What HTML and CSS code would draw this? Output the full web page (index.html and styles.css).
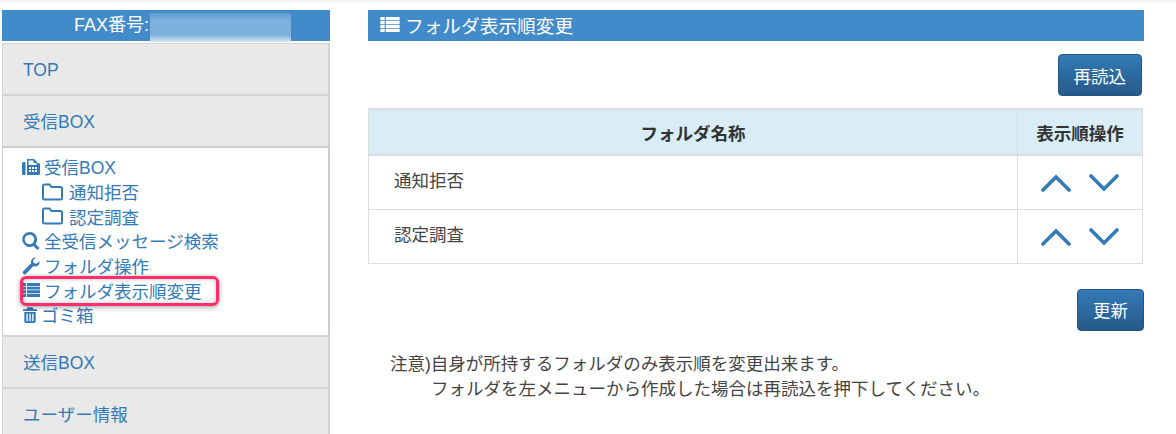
FILE: index.html
```html
<!DOCTYPE html>
<html lang="ja">
  <head>
    <meta charset="UTF-8" />
    <meta name="viewport" content="width=device-width, initial-scale=1.0" />
    <title>フォルダ表示順変更</title>
    <link rel="stylesheet" href="styles.css">
  </head>
  <body>
    <div class="page">
      <div class="side">
        <div class="fax-title">FAX番号:<span class="fax-mask"></span></div>
        <div class="menu">
          <a class="menu-head">TOP</a>
          <a class="menu-head">受信BOX</a>
          <div class="menu-body">
            <a class="item">
              <svg class="ico" viewBox="0 0 18 18"><path d="M0 5.500Q0 4 1.500 4H3.500V17H1.500Q0 17 0 15.500z"/><path fill-rule="evenodd" d="M5 1H12L15 4V5H16.500Q18 5 18 6.500V15.500Q18 17 16.500 17H5ZM6.500 2.500V7H14.500V5H11.500V2.500ZM7 9V11H9V9ZM10 9V11H12V9ZM13 9V11H15V9ZM7 12V14H9V12ZM10 12V14H12V12ZM13 12V14H15V12Z"/></svg>
              受信BOX
            </a>
            <a class="item sub">
              <svg class="ico-folder" viewBox="0 0 21 18"><path d="M1 15V3Q1 1.500 2.500 1.500H7.500L9.500 4H18.500Q20 4 20 5.500V15Q20 16.500 18.500 16.500H2.500Q1 16.500 1 15Z"/></svg>
              通知拒否
            </a>
            <a class="item sub">
              <svg class="ico-folder" viewBox="0 0 21 18"><path d="M1 15V3Q1 1.500 2.500 1.500H7.500L9.500 4H18.500Q20 4 20 5.500V15Q20 16.500 18.500 16.500H2.500Q1 16.500 1 15Z"/></svg>
              認定調査
            </a>
            <a class="item">
              <svg class="ico" viewBox="0 0 18 18"><path fill-rule="evenodd" d="M7.500 0a7.500 7.500 0 0 1 6 12l4 4-2 2-4-4a7.500 7.500 0 1 1-4-14ZM7.500 2.700a4.800 4.800 0 1 0 0 9.600 4.800 4.800 0 0 0 0-9.600Z"/></svg>
              全受信メッセージ検索
            </a>
            <a class="item">
              <svg class="ico" viewBox="0 0 18 18"><path d="M17.500 4.200Q18 7 16 8.500T11.500 9L4 16.800Q2.800 18 1.300 16.800 0 15.400 1.200 14.200L9 6.500Q8.300 4 10 2T14 .500L11 3.300 11.700 6 14.500 6.800Z"/></svg>
              フォルダ操作
            </a>
            <a class="item current">
              <svg class="ico" viewBox="0 0 18 14"><path d="M0 0H4V3H0ZM5 0H18V3H5ZM0 3.700H4V6.500H0ZM5 3.700H18V6.500H5ZM0 7.300H4V10.200H0ZM5 7.300H18V10.200H5ZM0 11H4V14H0ZM5 11H18V14H5Z"/></svg>
              フォルダ表示順変更
            </a>
            <a class="item">
              <svg class="ico trash" viewBox="0 0 16 18"><path fill-rule="evenodd" d="M5 0H11L12 2.500H16V4.500H0V2.500H4ZM1.500 5.500H14.500V16.500Q14.500 18 13 18H3Q1.500 18 1.500 16.500ZM4 7.500V16H5.500V7.500ZM7.300 7.500V16H8.800V7.500ZM10.500 7.500V16H12V7.500Z"/></svg>
              ゴミ箱
            </a>
          </div>
          <a class="menu-head">送信BOX</a>
          <a class="menu-head">ユーザー情報</a>
        </div>
      </div>

      <div class="main">
        <h1 class="main-title">
          <svg class="title-ico" viewBox="0 0 18 14"><path d="M0 0H4V3H0ZM5 0H18V3H5ZM0 3.700H4V6.500H0ZM5 3.700H18V6.500H5ZM0 7.300H4V10.200H0ZM5 7.300H18V10.200H5ZM0 11H4V14H0ZM5 11H18V14H5Z"/></svg>
          フォルダ表示順変更
        </h1>
        <div class="reload-row">
          <button class="btn">再読込</button>
        </div>
        <table class="folders">
          <thead>
            <tr>
              <th>フォルダ名称</th>
              <th class="col-order">表示順操作</th>
            </tr>
          </thead>
          <tbody>
            <tr>
              <td class="col-name">通知拒否</td>
              <td class="col-order">
                <div class="arrows">
                  <svg viewBox="0 0 30 18"><path d="M2 16L15 3L28 16"/></svg>
                  <svg viewBox="0 0 30 18"><path d="M2 2L15 15L28 2"/></svg>
                </div>
              </td>
            </tr>
            <tr>
              <td class="col-name">認定調査</td>
              <td class="col-order">
                <div class="arrows">
                  <svg viewBox="0 0 30 18"><path d="M2 16L15 3L28 16"/></svg>
                  <svg viewBox="0 0 30 18"><path d="M2 2L15 15L28 2"/></svg>
                </div>
              </td>
            </tr>
          </tbody>
        </table>
        <div class="update-row">
          <button class="btn">更新</button>
        </div>
        <div class="note">
          <p>注意)自身が所持するフォルダのみ表示順を変更出来ます。</p>
          <p class="note-2">フォルダを左メニューから作成した場合は再読込を押下してください。</p>
        </div>
      </div>
    </div>
  </body>
</html>
```

FILE: styles.css
```css
* {
  box-sizing: border-box;
  margin: 0;
  font-family: "Liberation Sans", "Noto Sans CJK JP", sans-serif;
}
html, body {
  height: 100%;
  overflow: hidden;
}
body {
  background: linear-gradient(#f4f4f4, #fff 4px) no-repeat;
  font-size: 17.500px;
  color: #444;
}
.page {
  display: flex;
  gap: 38px;
  padding: 10px 0 0 2px;
}

/* left menu */
.side {
  flex: 0 0 328px;
}
.fax-title {
  position: relative;
  height: 31px;
  padding-left: 72px;
  background: #428bca;
  color: #fff;
  font-size: 18px;
  line-height: 30px;
}
.fax-mask {
  position: absolute;
  left: 148px;
  top: 3px;
  width: 141px;
  height: 29px;
  background: linear-gradient(#5c9bd2, #7db0dc 25%, #7db0dc 75%, #d5e6f4);
}
.menu {
  margin-top: 2px;
}
.menu-head {
  display: block;
  height: 52px;
  padding-left: 20px;
  background: #e9e9e9;
  border: 1px solid #d5d3d3;
  border-width: 2px 2px 0 1px;
  color: #337ab7;
  line-height: 52px;
}
.menu-head:first-child {
  height: 51px;
  margin-top: 1px;
  border-top-width: 1px;
}
.menu-body {
  height: 189px;
  padding: 6.500px 0 0 19px;
  background: #fff;
  border: 1px solid #ccc;
  border-width: 2px 2px 0 1px;
}
.item {
  display: flex;
  align-items: center;
  gap: 4px;
  height: 24.700px;
  color: #337ab7;
  white-space: nowrap;
}
.sub {
  padding-left: 20px;
  gap: 6px;
}
.ico {
  flex: none;
  width: 18px;
  height: 18px;
  fill: #337ab7;
}
.trash {
  width: 14px;
  margin-left: 1px;
}
.ico-folder {
  flex: none;
  width: 21px;
  height: 18px;
  fill: none;
  stroke: #337ab7;
  stroke-width: 2;
}
.current {
  position: relative;
}
/* red marker drawn over the screenshot */
.current::after {
  content: "";
  box-sizing: border-box;
  position: absolute;
  left: -2px;
  top: -2px;
  width: 199px;
  height: 30px;
  border: 3px solid #ff2d6b;
  border-radius: 6px;
  box-shadow: 0 1px 5px rgba(0, 0, 0, 0.4), inset 0 0 4px rgba(0, 0, 0, 0.25);
}

/* main column */
.main {
  flex: 0 0 776px;
}
.main-title {
  display: flex;
  align-items: center;
  gap: 5px;
  height: 31px;
  padding: 0 0 2px 12px;
  background: #428bca;
  color: #fff;
  font-size: 18.700px;
  font-weight: 400;
}
.title-ico {
  width: 20px;
  height: 15px;
  fill: #fff;
}
.reload-row {
  display: flex;
  justify-content: flex-end;
  padding: 13px 2px 12px 0;
}
.btn {
  height: 42px;
  padding: 0 15px;
  background: linear-gradient(#337ab7, #265a88);
  border: 1px solid #245580;
  border-radius: 4px;
  color: #fff;
  font-size: 17.500px;
}
.folders {
  width: 775px;
  border-collapse: collapse;
  border: 1px solid #ddd;
}
.folders th, .folders td {
  border: 1px solid #ddd;
}
.folders th {
  height: 46px;
  background: #d9edf7;
  border-width: 2px 1px;
  color: #333;
}
.folders td {
  height: 54px;
}
.col-name {
  padding: 0 0 6px 25px;
}
.folders .col-order {
  width: 125px;
}
.arrows {
  display: flex;
  justify-content: center;
  align-items: flex-start;
  gap: 18px;
  height: 24px;
  padding-top: 4px;
}
.arrows svg {
  flex: none;
  width: 30px;
  height: 18px;
  fill: none;
  stroke: #337ab7;
  stroke-width: 3.600;
  stroke-linecap: round;
}
.update-row {
  display: flex;
  justify-content: flex-end;
  margin-top: 25px;
}
.note {
  margin: 21px 0 0 22px;
  line-height: 25px;
}
.note-2 {
  padding-left: 41px;
}
```
